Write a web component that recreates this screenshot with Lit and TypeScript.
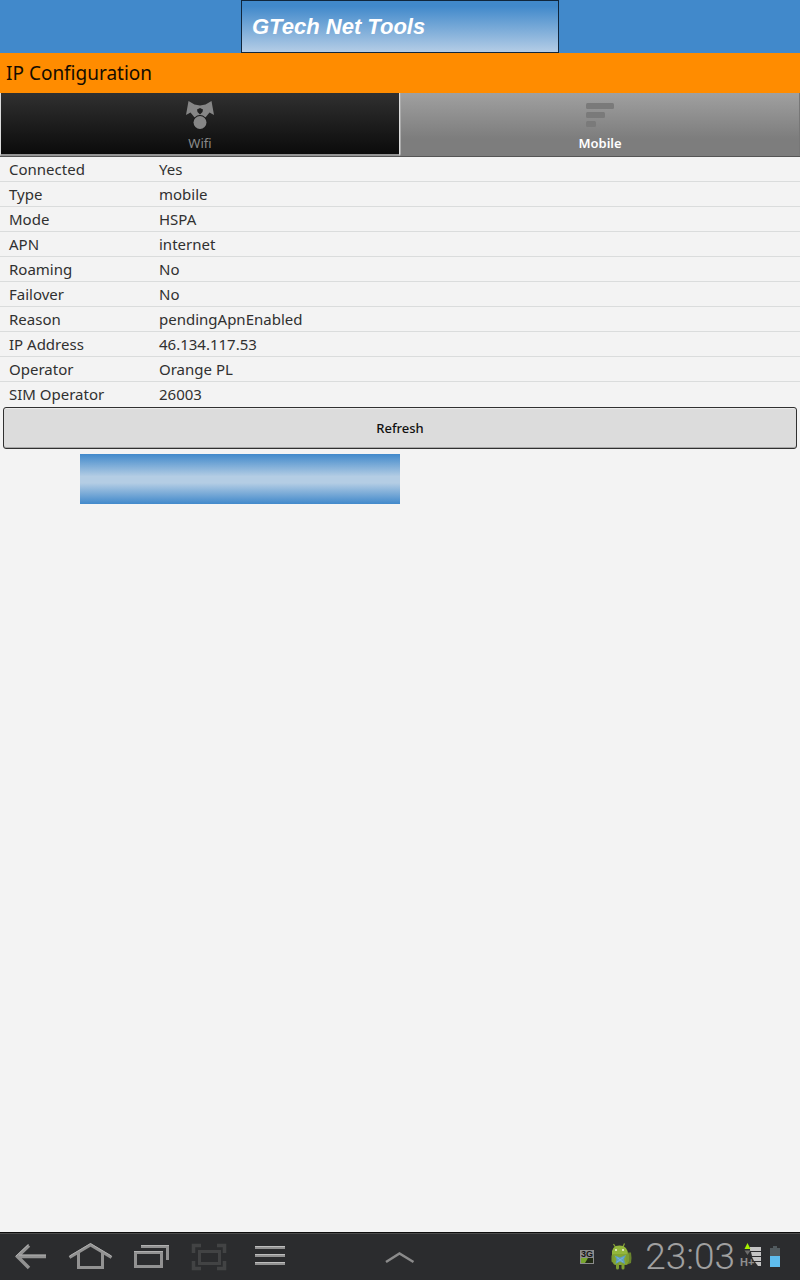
import { LitElement, html, css, svg } from "lit";
import { customElement, property, state } from "lit/decorators.js";

type Row = [string, string];

const MOBILE_ROWS: Row[] = [
  ["Connected", "Yes"],
  ["Type", "mobile"],
  ["Mode", "HSPA"],
  ["APN", "internet"],
  ["Roaming", "No"],
  ["Failover", "No"],
  ["Reason", "pendingApnEnabled"],
  ["IP Address", "46.134.117.53"],
  ["Operator", "Orange PL"],
  ["SIM Operator", "26003"],
];

const wifiIcon = svg`<svg width="28" height="28" viewBox="0 0 28 28" fill="#868686" aria-hidden="true">
  <path d="M2.500 0 8.500 3.500 14 4.500 19.500 3.500 25.500 0 28 14 23.500 11.500 19 17H9L4.500 11.500 0 14Z"/>
  <path d="M11 8.500 14 7 17 8.500 16.500 11 14 13.500 11.500 11Z" fill="#202020"/>
  <circle cx="14" cy="21.500" r="7.400" fill="#1a1a1a"/>
  <circle cx="14" cy="21.500" r="6.500"/>
</svg>`;

const mobileIcon = svg`<svg width="28" height="28" viewBox="0 0 28 28" fill="#7a7a7a" aria-hidden="true">
  <rect y="2" width="28" height="6" rx="1.500"/>
  <rect y="11" width="19" height="6" rx="1.500"/>
  <rect y="20" width="10" height="6" rx="1.500"/>
</svg>`;

@customElement("system-bar")
class SystemBar extends LitElement {
  @property() time = "23:03";

  static styles = css`
    :host {
      display: block;
      background: #2b2c2e;
      border-top: 1px solid #0c0c0c;
      box-shadow: inset 0 1px #4c4c4c;
      color: #929292;
    }
    .bar {
      display: grid;
      grid-template-columns: 1fr 30px 1fr;
      align-items: center;
      height: 47px;
    }
    .keys {
      display: flex;
    }
    button {
      display: grid;
      place-items: center;
      width: 60px;
      height: 46px;
      padding: 0;
      border: 0;
      background: none;
      color: inherit;
    }
    .expand {
      width: 30px;
    }
    svg {
      display: block;
    }
    .status {
      display: flex;
      align-items: center;
      justify-content: flex-end;
      padding-right: 20px;
    }
    .network {
      margin-right: 17px;
    }
    .robot {
      margin-right: 12px;
    }
    .clock {
      color: #a0a0a0;
      font: 300 37px/40px Roboto, sans-serif;
    }
    .signal {
      margin: 0 9px 0 5px;
    }
  `;

  render() {
    return html`
      <div class="bar">
        <div class="keys">
          <button aria-label="Back">
            <svg width="60" height="46" viewBox="0 0 60 46" fill="none" stroke="currentColor" stroke-width="3.500">
              <path d="M46 22.500H17M29 11.500 17.500 22.500 29 34" /><path d="M46 21H19M28.500 10.500 16 22" stroke="#b0b0b0" stroke-width="1" />
            </svg>
          </button>
          <button aria-label="Home">
            <svg width="60" height="46" viewBox="0 0 60 46" fill="none" stroke="currentColor" stroke-width="3">
              <path d="M9.500 23.500 30.500 11 51.500 23.500M18.500 19V33.500H42.500V19" /><path d="M9.500 22 30.500 9.500 51.500 22" stroke="#b0b0b0" stroke-width="1" />
            </svg>
          </button>
          <button aria-label="Recent apps">
            <svg width="60" height="46" viewBox="0 0 60 46" fill="none" stroke="currentColor" stroke-width="3">
              <path d="M15.500 18.500H41.500V32.500H15.500ZM21 12.500H47.500V26" /><path d="M14 17.500H43M21 11.500H49" stroke="#b0b0b0" stroke-width="1" />
            </svg>
          </button>
          <button aria-label="Screenshot">
            <svg width="60" height="46" viewBox="0 0 60 46" fill="none" stroke="#424344" stroke-width="3">
              <path d="M19.500 17.500H39.500V29.500H19.500Z" />
              <path d="M13.500 19V11.500H21M37 11.500H44.500V19M44.500 27V34.500H37M21 34.500H13.500V27" stroke-width="3.500" />
            </svg>
          </button>
          <button aria-label="Menu">
            <svg width="60" height="46" viewBox="0 0 60 46" fill="currentColor">
              <path d="M15 12H45V15H15ZM15 20H45V23H15ZM15 28H45V31H15Z" />
              <path d="M15 12H45V13H15ZM15 20H45V21H15ZM15 28H45V29H15Z" fill="#bdbdbd" />
            </svg>
          </button>
        </div>
        <button class="expand" aria-label="Expand">
          <svg width="30" height="46" viewBox="0 0 30 46" fill="none" stroke="#8b8b8b" stroke-width="2.500">
            <path d="M1 28 14.500 19.500 28.500 28" />
          </svg>
        </button>
        <div class="status">
          <svg class="network" width="14" height="14" viewBox="0 0 14 14" role="img" aria-label="3G">
            <rect width="14" height="14" fill="#8c8c8c" />
            <text x="7" y="7" text-anchor="middle" font-family="Liberation Sans, sans-serif" font-size="9" font-weight="bold" fill="#141414">3G</text>
            <rect x="1" y="8" width="12" height="5" fill="#222b16" />
            <path d="M1 13V8H8L5 13Z" fill="#78a62e" />
          </svg>
          <svg class="robot" width="22" height="27" viewBox="0 0 22 27" role="img" aria-label="Android">
            <path d="M2.500 1 5 5M13.500 0.500 11.500 5" stroke="#8aa836" stroke-width="1.200" />
            <path d="M15 9.500H20Q21 15 20 20L15 22Z" fill="#69842d" />
            <path d="M1 12Q0 2.500 8.500 2.500T17 12Z" fill="#93b63c" />
            <path d="M2 11H17V19Q17 22 14 22H5Q2 22 2 19Z" fill="#83a532" />
            <path d="M2 13V18M16.500 12V18M6.500 20V25M12 20V25" stroke="#7c9d31" stroke-width="3" stroke-linecap="round" />
            <circle cx="5" cy="7" r="1" fill="#eef2df" /><circle cx="12" cy="7" r="1" fill="#eef2df" />
            <path d="M3.500 12.500 9 14.500 15 12 13 16 14 21 9 18.500 4.500 21 5.500 16Z" fill="#5c9fc6" />
            <path d="M6 14.500 12 19M12.500 14.500 6 19" stroke="#7fb5d5" />
          </svg>
          <time class="clock">${this.time}</time>
          <svg class="signal" width="21" height="27" viewBox="0 0 21 27" role="img" aria-label="H+ signal">
            <path d="M10 4H21V8H10ZM11 9H21V13H12ZM12 14H21V18H14ZM15 19H21V23H18Z" fill="#c4c4c4" />
            <path d="M4.500 6 7.500 0 10.500 6Z" fill="#a5ef00" />
            <path d="M4.500 7.500H10.500L7.500 12Z" fill="#6c6c6c" />
            <text x="0" y="23" font-family="Liberation Sans, sans-serif" font-size="11" font-weight="bold" fill="#8f8f8f">H+</text>
          </svg>
          <svg width="10" height="22" viewBox="0 0 10 22" role="img" aria-label="Battery">
            <path d="M3 0H7V2H10V21H0V2H3Z" fill="#515a5e" />
            <path d="M0 10H10V21H0Z" fill="#5fbdee" />
          </svg>
        </div>
      </div>
    `;
  }
}

@customElement("app-root")
class AppRoot extends LitElement {
  @state() private tab: "wifi" | "mobile" = "mobile";

  static styles = css`
    :host {
      display: flex;
      flex-direction: column;
      min-height: 100vh;
      background: #f3f3f3;
      color: #303030;
      font: 15px/24px "Noto Sans", "Open Sans", sans-serif;
    }
    .brand {
      display: flex;
      justify-content: center;
      background: #4189cb;
    }
    .logo {
      box-sizing: border-box;
      width: 318px;
      height: 53px;
      padding: 0 10px;
      border: 1px solid #10263c;
      background: linear-gradient(#4189cb 10%, #b4cde6);
      color: #fff;
      font: italic bold 22px/52px "Liberation Sans", Arial, sans-serif;
    }
    h1 {
      margin: 0;
      padding: 0 6px;
      background: #ff8c00;
      color: #140c00;
      font-size: 19px;
      font-weight: 400;
      line-height: 40px;
    }
    .tabs {
      display: grid;
      grid-template-columns: 1fr 1fr;
      height: 64px;
      box-sizing: border-box;
      border-bottom: 1px solid #555;
      background: #8c8c8c;
    }
    .tab {
      display: flex;
      flex-direction: column;
      align-items: center;
      gap: 4px;
      margin: 0;
      padding: 8px 0 0;
      border: solid #ddd;
      border-width: 0 1px 2px;
      border-bottom-color: #959595;
      background: linear-gradient(#303030, #0b0b0b);
      color: #8a8a8a;
      font: inherit;
      font-size: 13px;
      line-height: 20px;
    }
    .tab.selected {
      border-color: #aaa #777 #7d7d7d #aaa;
      background: linear-gradient(#a0a0a0, #7d7d7d 75%);
      color: #fff;
      font-weight: 600;
    }
    .tab svg {
      flex: none;
    }
    table {
      width: 100%;
      border-collapse: separate;
      border-spacing: 0;
    }
    th,
    td {
      height: 24px;
      padding: 0;
      border-bottom: 1px solid #dadcdc;
      font-weight: 400;
      text-align: left;
    }
    tr:last-child > * {
      border-bottom-color: transparent;
    }
    th {
      width: 150px;
      padding-left: 9px;
      box-sizing: border-box;
    }
    td {
      padding-left: 9px;
    }
    .refresh {
      height: 42px;
      margin: 0 3px;
      padding: 0;
      border: 1px solid #303030;
      border-radius: 3px;
      background: #dcdcdc;
      box-shadow: inset 0 -1px #a9a9a9, inset 0 1px #ebebeb;
      color: #101010;
      font: inherit;
      font-size: 13px;
      font-weight: 500;
    }
    .banner {
      width: 320px;
      height: 50px;
      margin: 5px 0 0 80px;
      background: linear-gradient(#4189cb, #b4cde4 45%, #b4cde4 58%, #4189cb);
    }
    main {
      display: flex;
      flex-direction: column;
      flex: 1;
    }
  `;

  render() {
    return html`
      <header>
        <div class="brand"><div class="logo">GTech Net Tools</div></div>
        <h1>IP Configuration</h1>
      </header>
      <div class="tabs" role="tablist">
        <button
          class="tab ${this.tab === "wifi" ? "selected" : ""}"
          role="tab"
          aria-selected=${this.tab === "wifi"}
          @click=${() => (this.tab = "wifi")}
        >${wifiIcon}<span>Wifi</span></button>
        <button
          class="tab ${this.tab === "mobile" ? "selected" : ""}"
          role="tab"
          aria-selected=${this.tab === "mobile"}
          @click=${() => (this.tab = "mobile")}
        >${mobileIcon}<span>Mobile</span></button>
      </div>
      <main>
        <table>
          <tbody>
            ${MOBILE_ROWS.map(([name, value]) => html`<tr><th scope="row">${name}</th><td>${value}</td></tr>`)}
          </tbody>
        </table>
        <button class="refresh">Refresh</button>
        <div class="banner"></div>
      </main>
      <system-bar></system-bar>
    `;
  }
}
